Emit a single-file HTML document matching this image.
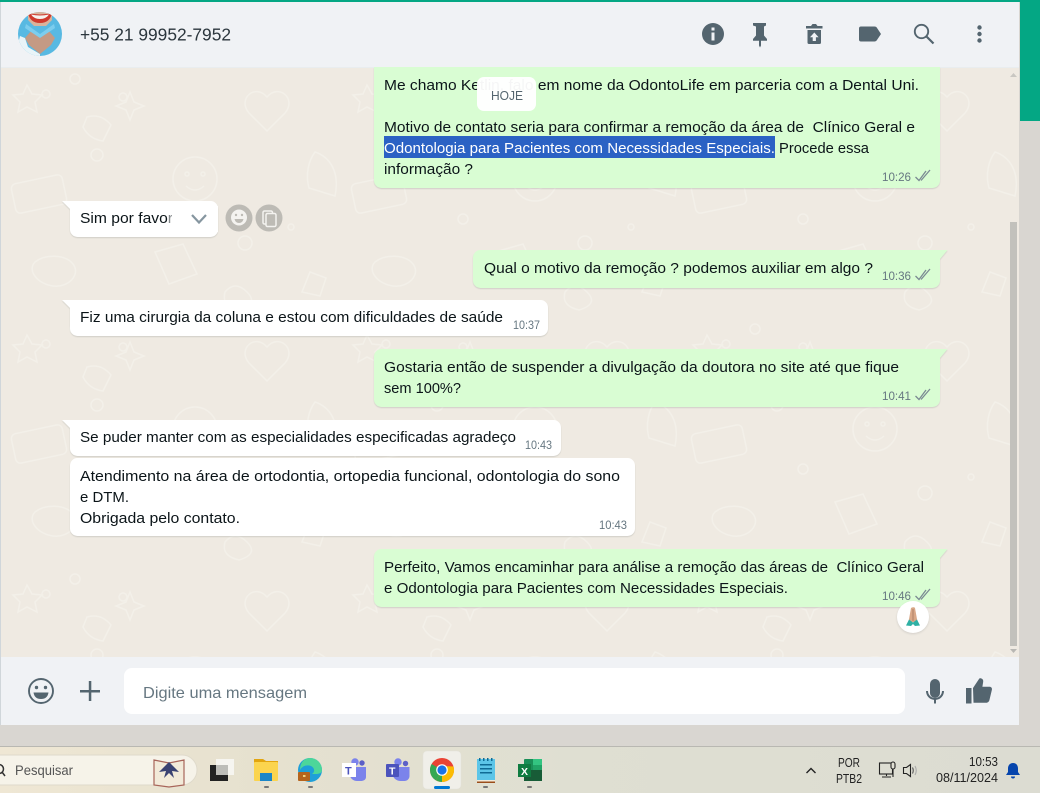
<!DOCTYPE html>
<html lang="pt-BR">
<head>
<meta charset="utf-8">
<title>WhatsApp</title>
<style>
html,body{margin:0;padding:0;width:1040px;height:793px;overflow:hidden;background:#d9d6d1}
svg{display:block}
text{font-family:"Liberation Sans",sans-serif;white-space:pre}
.m{font-size:14.8px;fill:#0b1418}
.t{font-size:12px;fill:#667781}
</style>
</head>
<body>
<svg width="1040" height="793" viewBox="0 0 1040 793" xmlns="http://www.w3.org/2000/svg">
<defs>
<linearGradient id="tb" x1="0" x2="1" y1="0" y2="0">
<stop offset="0" stop-color="#efe7d4"/><stop offset=".25" stop-color="#e6e1cf"/><stop offset=".55" stop-color="#dfdfd2"/><stop offset="1" stop-color="#dcdcd2"/>
</linearGradient>
<pattern id="doodle" width="340" height="250" patternUnits="userSpaceOnUse" patternTransform="translate(5 67)">
<g fill="none" stroke="#f3f0e9" stroke-width="1.500">
<path d="M22 18l5 9 10 1-7 7 2 10-10-5-9 5 2-10-7-7 10-1z"/>
<circle cx="41" cy="27" r="4"/><circle cx="70" cy="12" r="5"/><circle cx="118" cy="30" r="4"/>
<path d="M262 30c-12-14-30 2-18 16l18 18 18-18c12-14-6-30-18-16z"/>
<path d="M125 25l4 10 10 4-10 4-4 10-4-10-10-4 10-4z"/>
<rect x="8" y="112" width="52" height="30" rx="5" transform="rotate(-12 34 127)"/>
<circle cx="190" cy="112" r="22"/><circle cx="182" cy="107" r="2"/><circle cx="198" cy="107" r="2"/><path d="M181 119q9 8 18 0"/>
<path d="M310 85c15 5 25 20 20 44l-26-8c-4-14 0-28 6-36z"/>
<circle cx="92" cy="88" r="6"/><circle cx="286" cy="160" r="3"/><circle cx="118" cy="152" r="5"/><circle cx="240" cy="176" r="7"/>
<path d="M30 195c10-8 30-8 38 2s-4 24-20 22-26-16-18-24z"/>
<path d="M150 185l28-8 14 30-28 10z"/>
<path d="M305 205l16 6-6 18-18-4zM82 50q14-4 24 8l-8 16q-14-2-20-14z"/>
<path d="M220 225q10-12 22 0t-8 18q-18-4-14-18z"/>
</g>
</pattern>
</defs>

<!-- base -->
<rect width="1040" height="793" fill="#d9d6d1"/>
<rect width="1040" height="2" fill="#04a784"/>
<rect x="1020" y="0" width="20" height="121" fill="#04a784"/>
<rect x="0" y="2" width="1" height="723" fill="#d0d6da"/>

<!-- chat area -->
<rect x="1" y="67" width="1018" height="590" fill="#efeae2"/>
<rect x="1" y="67" width="1018" height="590" fill="url(#doodle)"/>

<!-- header -->
<rect x="1" y="2" width="1018" height="65" fill="#f0f2f5"/>
<rect x="1" y="67" width="1018" height="1" fill="#e9edef"/>
<clipPath id="av"><circle cx="40" cy="34" r="22"/></clipPath>
<g clip-path="url(#av)">
<rect x="18" y="12" width="44" height="44" fill="#58b9e2"/>
<path d="M28 12h24v8l-6 6h-12l-6-6z" fill="#d9b39c"/>
<path d="M28 13q12 3 24 0q-2 10-12 10t-12-10z" fill="#cf3a2e"/>
<path d="M31 14.500q9 2 18 0q-3 4.500-9 4.500t-9-4.500z" fill="#f6f3ef"/>
<path d="M25 38l7-8 8 6 8-6 7 8-4 7-11 9-11-9z" fill="#c49a84"/>
<path d="M20 36l5 2 3 9 12 7v3h-14l-9-9z" fill="#e9f4f8"/>
<path d="M26 24l14 10 14-10 1 4-15 10-15-10z" fill="#7ccdee"/>
</g>
<text x="80" y="40.500" font-size="17.500" fill="#2b363d" textLength="151" lengthAdjust="spacingAndGlyphs">+55 21 99952-7952</text>

<!-- header icons -->
<g fill="#54656f">
<circle cx="713" cy="34" r="11"/>
<rect x="711.500" y="32.500" width="3" height="8" fill="#f0f2f5"/><rect x="711.500" y="27.500" width="3" height="3" fill="#f0f2f5"/>
<path d="M753 23h13v2.500l-2 1v9l3 3.500v1.800h-6v4.700l-1 2-1-2v-4.700h-6v-1.800l3-3.500v-9l-3-1z"/>
<path d="M806 26h5l1.500-2h3.500l1.500 2h5v2.500h-16.500z"/><path fill-rule="evenodd" d="M807.500 30h13.500v12.500a1.500 1.500 0 0 1-1.500 1.500h-10.500a1.500 1.500 0 0 1-1.500-1.500zM814.300 32.500l-4.300 4.800h2.700v3.700h3.200v-3.700h2.700z"/>
<path d="M861 26.500h13.500c1 0 1.800.4 2.300 1.100l4.200 6.400-4.200 6.300c-.5.700-1.300 1.200-2.300 1.200h-13.500a2 2 0 0 1-2-2v-11a2 2 0 0 1 2-2z"/>
<circle cx="979.500" cy="27.500" r="2.200"/><circle cx="979.500" cy="34" r="2.200"/><circle cx="979.500" cy="40.500" r="2.200"/>
</g>
<circle cx="921.500" cy="31.500" r="6.700" fill="none" stroke="#54656f" stroke-width="1.900"/>
<path d="M926.500 36.500l7 7" stroke="#54656f" stroke-width="2.200"/>

<!-- scrollbar -->
<path d="M1013.500 73l-3.500 4h7z" fill="#c9c7c2"/>
<rect x="1010" y="222" width="7" height="424" fill="#c2c1bc"/>
<path d="M1010 649h7l-3.500 4z" fill="#b8b7b3"/>

<!-- bubbles -->
<g style="filter:drop-shadow(0 1px .5px rgba(11,20,26,.13))">
<path d="M374 67h566v113.500a7.500 7.500 0 0 1-7.500 7.500h-551a7.500 7.500 0 0 1-7.500-7.500z" fill="#d9fdd3"/>
<path d="M77.500 201h133a7.500 7.500 0 0 1 7.500 7.500v21a7.500 7.500 0 0 1-7.500 7.500h-133a7.500 7.500 0 0 1-7.500-7.500v-20.500l-8-8z" fill="#fff"/>
<path d="M480.500 250h467l-7.500 9v21.500a7.500 7.500 0 0 1-7.500 7.500h-452a7.500 7.500 0 0 1-7.500-7.500v-23a7.500 7.500 0 0 1 7.500-7.500z" fill="#d9fdd3"/>
<path d="M77.500 300h463a7.500 7.500 0 0 1 7.500 7.500v21a7.500 7.500 0 0 1-7.500 7.500h-463a7.500 7.500 0 0 1-7.500-7.500v-20.500l-8-8z" fill="#fff"/>
<path d="M381.500 349h566l-7.500 9v41.500a7.500 7.500 0 0 1-7.500 7.500h-551a7.500 7.500 0 0 1-7.500-7.500v-43a7.500 7.500 0 0 1 7.500-7.500z" fill="#d9fdd3"/>
<path d="M77.500 420h476a7.500 7.500 0 0 1 7.500 7.500v21a7.500 7.500 0 0 1-7.500 7.500h-476a7.500 7.500 0 0 1-7.500-7.500v-20.500l-8-8z" fill="#fff"/>
<rect x="70" y="458" width="565" height="78" rx="7.500" fill="#fff"/>
<path d="M381.500 549h566l-7.500 9v41.500a7.500 7.500 0 0 1-7.500 7.500h-551a7.500 7.500 0 0 1-7.500-7.500v-43a7.500 7.500 0 0 1 7.500-7.500z" fill="#d9fdd3"/>
</g>

<!-- message 1 -->
<text class="m" x="384" y="90" textLength="535" lengthAdjust="spacingAndGlyphs">Me chamo Ketlin, falo em nome da OdontoLife em parceria com a Dental Uni.</text>
<rect x="477" y="77" width="59" height="34" rx="7" fill="#fff" fill-opacity=".96"/>
<text x="491" y="100" font-size="13" fill="#54656f" textLength="32" lengthAdjust="spacingAndGlyphs">HOJE</text>
<text class="m" x="384" y="132" textLength="531" lengthAdjust="spacingAndGlyphs">Motivo de contato seria para confirmar a remoção da área de  Clínico Geral e</text>
<rect x="384" y="136" width="391" height="22" fill="#2b62c4"/>
<text class="m" x="384" y="153" textLength="391" lengthAdjust="spacingAndGlyphs" style="fill:#fff">Odontologia para Pacientes com Necessidades Especiais.</text>
<text class="m" x="779" y="153" textLength="90" lengthAdjust="spacingAndGlyphs">Procede essa</text>
<text class="m" x="384" y="174" textLength="89" lengthAdjust="spacingAndGlyphs">informação ?</text>
<text class="t" x="882" y="181" textLength="29" lengthAdjust="spacingAndGlyphs">10:26</text>

<!-- sim por favor -->
<text class="m" x="80" y="223" textLength="93" lengthAdjust="spacingAndGlyphs">Sim por favor</text>
<rect x="172" y="206" width="46" height="26" fill="#fff"/>
<rect x="168" y="206" width="6" height="26" fill="#fff" fill-opacity=".5"/>
<path d="M192 215l7 7.500 7-7.500" fill="none" stroke="#8696a0" stroke-width="2.200"/>
<circle cx="239" cy="218" r="13.500" fill="#bdbbb5"/>
<circle cx="239" cy="217.500" r="8" fill="#f4f3f0"/>
<circle cx="236" cy="215" r="1.200" fill="#bdbbb5"/><circle cx="242" cy="215" r="1.200" fill="#bdbbb5"/>
<path d="M234.500 219h9q-1 4-4.500 4t-4.500-4z" fill="#bdbbb5"/>
<circle cx="269" cy="218" r="13.500" fill="#bdbbb5"/>
<rect x="263" y="211" width="9.500" height="13" rx="1.500" fill="none" stroke="#f4f3f0" stroke-width="1.500"/>
<rect x="266" y="213.500" width="10" height="13" rx="1.500" fill="#bdbbb5" stroke="#f4f3f0" stroke-width="1.500"/>

<!-- others -->
<text class="m" x="484" y="273" textLength="389" lengthAdjust="spacingAndGlyphs">Qual o motivo da remoção ? podemos auxiliar em algo ?</text>
<text class="t" x="882" y="280" textLength="29" lengthAdjust="spacingAndGlyphs">10:36</text>

<text class="m" x="80" y="322" textLength="423" lengthAdjust="spacingAndGlyphs">Fiz uma cirurgia da coluna e estou com dificuldades de saúde</text>
<text class="t" x="513" y="329" textLength="27" lengthAdjust="spacingAndGlyphs">10:37</text>

<text class="m" x="384" y="372" textLength="515" lengthAdjust="spacingAndGlyphs">Gostaria então de suspender a divulgação da doutora no site até que fique</text>
<text class="m" x="384" y="393" textLength="77" lengthAdjust="spacingAndGlyphs">sem 100%?</text>
<text class="t" x="882" y="400" textLength="29" lengthAdjust="spacingAndGlyphs">10:41</text>

<text class="m" x="80" y="442" textLength="436" lengthAdjust="spacingAndGlyphs">Se puder manter com as especialidades especificadas agradeço</text>
<text class="t" x="525" y="449" textLength="27" lengthAdjust="spacingAndGlyphs">10:43</text>

<text class="m" x="80" y="481" textLength="540" lengthAdjust="spacingAndGlyphs">Atendimento na área de ortodontia, ortopedia funcional, odontologia do sono</text>
<text class="m" x="80" y="502" textLength="49" lengthAdjust="spacingAndGlyphs">e DTM.</text>
<text class="m" x="80" y="523" textLength="160" lengthAdjust="spacingAndGlyphs">Obrigada pelo contato.</text>
<text class="t" x="599" y="529" textLength="28" lengthAdjust="spacingAndGlyphs">10:43</text>

<text class="m" x="384" y="572" textLength="540" lengthAdjust="spacingAndGlyphs">Perfeito, Vamos encaminhar para análise a remoção das áreas de  Clínico Geral</text>
<text class="m" x="384" y="593" textLength="404" lengthAdjust="spacingAndGlyphs">e Odontologia para Pacientes com Necessidades Especiais.</text>
<text class="t" x="882" y="600" textLength="29" lengthAdjust="spacingAndGlyphs">10:46</text>

<!-- ticks -->
<g fill="none" stroke="#7b8a93" stroke-width="1.300">
<path d="M915.500 177l3.500 3.500 7-9.500M921 180.500l9-10.500"/>
<path d="M915.500 276l3.500 3.500 7-9.500M921 279.500l9-10.500"/>
<path d="M915.500 396l3.500 3.500 7-9.500M921 399.500l9-10.500"/>
<path d="M915.500 596l3.500 3.500 7-9.500M921 599.500l9-10.500"/>
</g>

<!-- reaction -->
<circle cx="913" cy="617" r="16" fill="#fff" style="filter:drop-shadow(0 1px 1px rgba(11,20,26,.12))"/>
<path d="M911 608c1.500-1 3.500-1 4 0l2.500 14h-9z" fill="#d9a888"/>
<path d="M913 609v12" stroke="#b07f66" stroke-width="1"/>
<path d="M906 625.500l3-6 4 3 4-3 3 6-5 .5-2-2-2 2z" fill="#2fb0a4"/>

<!-- footer -->
<rect x="1" y="657" width="1018" height="68" fill="#f0f2f5"/>
<circle cx="41" cy="691" r="12" fill="none" stroke="#54656f" stroke-width="1.900"/>
<g fill="#54656f">
<circle cx="36.500" cy="687.500" r="1.700"/><circle cx="45.500" cy="687.500" r="1.700"/>
<path d="M33.500 692.500h15q-1 6.500-7.500 6.500t-7.500-6.500z"/>
<rect x="80" y="690" width="20" height="2.500"/><rect x="88.800" y="681" width="2.500" height="20"/>
</g>
<rect x="124" y="668" width="781" height="46" rx="8" fill="#fff"/>
<text x="143" y="698" font-size="16" fill="#667781" textLength="164" lengthAdjust="spacingAndGlyphs">Digite uma mensagem</text>
<g fill="#54656f">
<rect x="930" y="679" width="10" height="19" rx="5"/>
<path d="M926 691h2c0 3.900 3.100 7 7 7s7-3.100 7-7h2c0 4.600-3.400 8.400-8 8.900v3.600h-2v-3.600c-4.600-.5-8-4.300-8-8.900z"/>
<rect x="966" y="688" width="5.500" height="15.500"/>
<path d="M973 688l6-9c.6-.9 1.400-.8 2.400-.5 1.400.5 2 1.800 1.800 3.200l-.8 5h7c1.800 0 2.900 1.300 2.500 3l-2.400 10c-.4 1.800-1.500 3-3.300 3h-12.700z"/>
</g>

<!-- taskbar -->
<rect x="0" y="746" width="1040" height="47" fill="url(#tb)"/>
<rect x="0" y="746" width="1040" height="1" fill="#b9b8b2"/>
<rect x="-30" y="755" width="227" height="30" rx="15" fill="#f6f3e9" stroke="#dfdacb"/>
<circle cx="-1" cy="769" r="4.500" fill="none" stroke="#333" stroke-width="1.500"/>
<path d="M2 772l3 4" stroke="#333" stroke-width="1.500"/>
<text x="15" y="775" font-size="13.500" fill="#555" textLength="58" lengthAdjust="spacingAndGlyphs">Pesquisar</text>
<path d="M154 760l15 3 15-3v25l-15 2-15-2z" fill="#f2ead9" stroke="#a8655a" stroke-width="1.200"/>
<path d="M169 762l-10 10 7-1-2 7 5-5 5 5-2-7 7 1z" fill="#3a4272"/>

<path d="M216 759h18v16h-18z" fill="#f6f5f0"/>
<path d="M210 765h18v16h-18z" fill="#222"/>
<path d="M216 765h12v10h-12z" fill="#bdbdb8"/>
<!-- folder -->
<path d="M254 759h9l3 2h12v4h-24z" fill="#e2a50f"/>
<rect x="254" y="762" width="24" height="19" rx="1" fill="#fbd44e"/>
<rect x="260" y="773" width="12" height="8" fill="#1a86c8"/>
<rect x="264" y="786" width="5" height="2" rx="1" fill="#777"/>
<!-- edge -->
<circle cx="310" cy="770" r="12" fill="#1f9fd8"/>
<path d="M310 758a12 12 0 0 1 12 12c0 3-3 4-6 4h-4c3-2 3-6-1-8-4-1.500-9 0-11 4 0-7 4-12 10-12z" fill="#4cd69a"/>
<rect x="298" y="772" width="12" height="9" rx="1" fill="#b5651d"/>
<rect x="303" y="775" width="2.500" height="2" fill="#f3d07a"/>
<rect x="308" y="786" width="5" height="2" rx="1" fill="#777"/>
<!-- teams 1 -->
<circle cx="362" cy="763" r="2.700" fill="#5b5fc7"/>
<circle cx="355" cy="762" r="3.700" fill="#7b83eb"/>
<path d="M350 767h16v10c0 3-3 4-5 4h-4c-4 0-7-3-7-6z" fill="#7b83eb"/>
<rect x="342" y="763" width="14" height="14" fill="#fff"/>
<text x="345" y="774.500" font-size="11" font-weight="bold" fill="#4b53bc">T</text>
<!-- teams 2 -->
<circle cx="405.500" cy="763.500" r="2.700" fill="#5b5fc7"/>
<circle cx="398" cy="762" r="3.700" fill="#7b83eb"/>
<path d="M393 767h16.500v9c0 3-2.500 5-5 5h-4c-4 0-7.500-3-7.500-6z" fill="#7b83eb"/>
<rect x="386" y="764" width="13" height="13" rx="1" fill="#4b53bc"/>
<text x="389" y="774.500" font-size="10.500" font-weight="bold" fill="#fff">T</text>
<!-- chrome -->
<rect x="423" y="751" width="38" height="38" rx="4" fill="#f0efe9" stroke="#e3e2da" stroke-width=".5"/>
<circle cx="442" cy="770" r="12" fill="#ea4335"/>
<path d="M442 770l-10.400-6A12 12 0 0 0 436 780.400z" fill="#34a853"/>
<path d="M442 770l-6 10.400A12 12 0 0 0 453.500 766.500L442 766z" fill="#fbbc04"/>
<path d="M442 770l-6 10.400a12 12 0 0 0 6 1.600z" fill="#34a853"/>
<circle cx="442" cy="770" r="5.800" fill="#fff"/>
<circle cx="442" cy="770" r="4.600" fill="#1a73e8"/>
<rect x="434" y="786" width="16" height="3" rx="1.500" fill="#0078d4"/>
<!-- notepad -->
<rect x="477" y="759" width="18" height="21" fill="#5cc5e8"/>
<g fill="#0f6b95"><rect x="479" y="758" width="1.500" height="3"/><rect x="483" y="758" width="1.500" height="3"/><rect x="487" y="758" width="1.500" height="3"/><rect x="491" y="758" width="1.500" height="3"/><rect x="480" y="764" width="12" height="1.500"/><rect x="480" y="768" width="12" height="1.500"/><rect x="480" y="772" width="12" height="1.500"/></g>
<rect x="477" y="780" width="18" height="2" fill="#f2ead9"/>
<rect x="477" y="781.500" width="18" height="1.500" fill="#9a4d1a"/>
<rect x="483" y="786" width="5" height="2" rx="1" fill="#777"/>
<!-- excel -->
<rect x="524" y="759" width="18" height="22" rx="1" fill="#1a8f58"/>
<rect x="533" y="759" width="9" height="6" fill="#33c481"/>
<rect x="533" y="765" width="9" height="5" fill="#21a366"/>
<rect x="524" y="770" width="18" height="11" fill="#185c37"/>
<rect x="518" y="764" width="13" height="13" fill="#107c41"/>
<text x="521" y="775" font-size="10.500" font-weight="bold" fill="#fff">X</text>
<rect x="527" y="786" width="5" height="2" rx="1" fill="#777"/>

<!-- tray -->
<path d="M806.500 773l4.500-4.500 4.500 4.500" fill="none" stroke="#222" stroke-width="1.400"/>
<text x="838" y="767" font-size="12.500" fill="#222" textLength="22" lengthAdjust="spacingAndGlyphs">POR</text>
<text x="836" y="783" font-size="12.500" fill="#222" textLength="26" lengthAdjust="spacingAndGlyphs">PTB2</text>
<g fill="none" stroke="#222" stroke-width="1.100">
<rect x="879.500" y="763" width="13" height="11"/>
<path d="M886.500 774v2M882 777h9"/>
<rect x="891" y="762" width="4" height="7" rx="2" fill="#e0dfd3"/><path d="M893 769v8"/>
<path d="M903.500 767.500h3l4-3v12l-4-3h-3z"/>
<path d="M912.500 767.500q1.500 3 0 6" stroke="#555"/>
<path d="M915 766q2.500 4.500 0 9" stroke="#aaa"/>
</g>
<text x="969" y="766" font-size="12.500" fill="#222" textLength="29" lengthAdjust="spacingAndGlyphs">10:53</text>
<text x="936" y="782" font-size="12.500" fill="#222" textLength="62" lengthAdjust="spacingAndGlyphs">08/11/2024</text>
<path d="M1013 763c3.300 0 5 2.500 5 5.500v3.500l2 3h-14l2-3v-3.500c0-3 1.700-5.500 5-5.500z" fill="#0645ad"/>
<path d="M1011 776.500h4a2 2 0 0 1-4 0z" fill="#0645ad"/>
</svg>
</body>
</html>
